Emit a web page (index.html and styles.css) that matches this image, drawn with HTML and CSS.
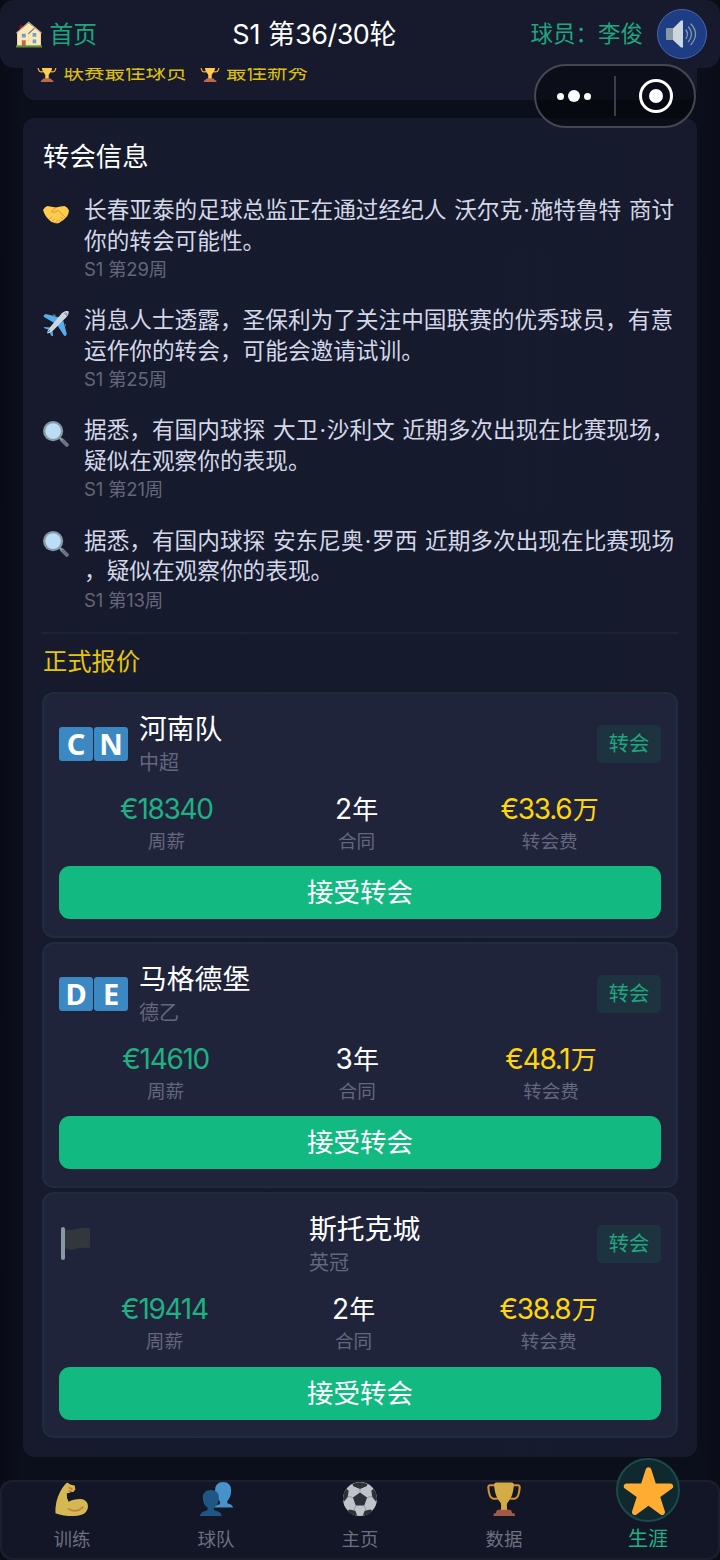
FILE: index.html
```html
<!DOCTYPE html>
<html lang="zh-CN">
<head>
<meta charset="utf-8">
<title>转会信息</title>
<link rel="stylesheet" href="styles.css">
</head>
<body>
<svg class="defs" width="0" height="0">
  <symbol id="trophy" viewBox="0 0 36 36">
    <path fill="none" stroke="#ffac33" stroke-width="2.2" d="M9 3.5H3.5Q1.2 3.5 1.4 6Q2.2 16.500 6 17.500Q8 18 11.500 17.500M27 3.500h5.500q2.300 0 2.100 2.500Q33.800 16.500 30 17.500Q28 18 24.500 17.500"/>
    <path fill="#ffcc4d" d="M10 .500H26Q28.500 .500 28.500 2.500C28 12 25.500 18 22 21.500c-1.500 1.500-1 5.500-.5 8.500h-7c.5-3 1-7-.5-8.500C10.500 18 8 12 7.500 2.500Q7.500 .500 10 .500z"/>
    <path fill="#c1694f" d="M12 29.500h12q2 0 2.500 3.500h2q1 0 1 1.500V36H7v-1.500q0-1.500 1-1.500h1.500q.5-3.500 2.500-3.500z"/>
  </symbol>
  <symbol id="glass" viewBox="0 0 36 36">
    <path stroke="#66757f" stroke-width="5.500" stroke-linecap="round" d="M26.500 26.500l6.500 6.500"/>
    <path stroke="#8899a6" stroke-width="3" d="M22 22l4.500 4.500"/>
    <circle cx="14" cy="14" r="14" fill="#8899a6"/>
    <circle cx="14" cy="14" r="10.800" fill="#bbddf5"/>
  </symbol>
</svg>

<header class="topbar">
  <div class="home">
    <svg class="home-icon" viewBox="0 0 36 36">
      <path fill="#a0041e" d="M5 5h4v8H5z"/>
      <path fill="#ffe8b6" d="M1.500 15L17.500 2 34.500 15v19h-33z"/>
      <path fill="#b9a98a" d="M17.500 0L36 15.500l-1 1.200L17.500 2.500 1 16.700 0 15.500z"/>
      <path fill="#66757f" d="M25 8.500l1 1.200-8.500 8-1-1z"/>
      <path fill="#f4d99a" d="M17 18l1-1v17h-1z"/>
      <path fill="#5fa3d9" d="M8 17h5.500v5H8zM23 16h5v5h-5zM23 25h5v5h-5z"/>
      <path fill="#c1694f" d="M8 26h5.500v8H8z"/>
      <path fill="#5c913b" d="M0 33h36v3H0z"/>
    </svg>
    <span class="home-label">首页</span>
  </div>
  <div class="round">S1 第<span class="tight">36/30</span>轮</div>
  <div class="player">
    <span class="player-name">球员：李俊</span>
    <span class="sound">
      <svg viewBox="0 0 32 32">
        <path fill="#8899a6" d="M1 10h8v12H1q-1 0-1-1V11q0-1 1-1z"/>
        <path fill="#ccd6dd" d="M7 10.500L15 2.500h2v27h-2L7 22z"/>
        <path fill="none" stroke="#8899a6" stroke-width="1.300" stroke-linecap="round" d="M20 12q3 4 0 8.500M22.500 9q6 7 0 14.500M25 6q9 10 0 20.500"/>
      </svg>
    </span>
  </div>
</header>

<div class="capsule">
  <span class="dots"><i></i><i class="big"></i><i></i></span>
  <span class="sep"></span>
  <span class="target"><i></i></span>
</div>

<main class="content">
  <section class="card awards">
    <span class="award"><svg viewBox="0 0 36 36"><use href="#trophy"/></svg>联赛最佳球员</span>
    <span class="award"><svg viewBox="0 0 36 36"><use href="#trophy"/></svg>最佳新秀</span>
  </section>

  <section class="card transfer">
    <h2 class="title">转会信息</h2>
    <ul class="news">
      <li class="item">
        <svg class="item-icon" viewBox="0 0 36 36">
          <path fill="#ef9645" d="M3 17l12 13q4 2 8 0l10-12-4-8H7z"/>
          <path fill="#ffcb4c" d="M0 12.500Q3 8 6 7q6 1 12 2 6-1.500 12-2 4 2 6 6-1 7-4 9.500-3 4-7 6-4 3-8 1-5 1-8-3Q3 22 0 12.500z"/>
          <path fill="none" stroke="#d98a32" stroke-width="1.200" stroke-linecap="round" d="M18 9q-5 3-6 6 4 2 9-2l9 9M9 25l3-3M13 28l3-3M18 29l2-2M25 23l3 3M22 26l2 2"/>
        </svg>
        <div class="item-body">
          <p>长春亚泰的足球总监正在通过经纪人 沃尔克<i class="dot">·</i>施特鲁特 商讨<br>你的转会可能性。</p>
          <small>S1 第29周</small>
        </div>
      </li>
      <li class="item">
        <svg class="item-icon" viewBox="0 0 36 36">
          <path fill="#55acee" d="M1 6l3-2 19 5-7 8L1 8zM28 13l5 19-2 3-2-1-9-14zM1 22l10 1 3 3-3 1-9-3zM14 35l-1-10-3-3-2 3 3 9z"/>
          <path fill="#66757f" d="M13 5l4 0 1 3-3 0zM31 17l1 4-3 0z"/>
          <path fill="#ccd6dd" d="M26 3q5-4 9-3 2 4-3 9L14 27q-5 4-8 4-1-3 4-9z"/>
          <path fill="#8899a6" d="M29 3l3-1 2 2-1 3z"/>
          <path fill="#269" d="M5 31l4-5 1 1z"/>
        </svg>
        <div class="item-body">
          <p>消息人士透露，圣保利为了关注中国联赛的优秀球员，有意<br>运作你的转会，可能会邀请试训。</p>
          <small>S1 第25周</small>
        </div>
      </li>
      <li class="item">
        <svg class="item-icon" viewBox="0 0 36 36"><use href="#glass"/></svg>
        <div class="item-body">
          <p>据悉，有国内球探 大卫<i class="dot">·</i>沙利文 近期多次出现在比赛现场，<br>疑似在观察你的表现。</p>
          <small>S1 第21周</small>
        </div>
      </li>
      <li class="item">
        <svg class="item-icon" viewBox="0 0 36 36"><use href="#glass"/></svg>
        <div class="item-body">
          <p>据悉，有国内球探 安东尼奥<i class="dot">·</i>罗西 近期多次出现在比赛现场<br>，疑似在观察你的表现。</p>
          <small>S1 第13周</small>
        </div>
      </li>
    </ul>

    <h3 class="subtitle">正式报价</h3>
    <div class="offers">
      <article class="offer">
        <div class="offer-head">
          <div class="flag"><b>C</b><b>N</b></div>
          <div class="club"><strong>河南队</strong><span>中超</span></div>
          <span class="tag">转会</span>
        </div>
        <div class="stats">
          <div class="stat"><b class="wage">€18340</b><span>周薪</span></div>
          <div class="stat"><b>2<i>年</i></b><span>合同</span></div>
          <div class="stat"><b class="fee">€33.6<i>万</i></b><span>转会费</span></div>
        </div>
        <button class="accept">接受转会</button>
      </article>
      <article class="offer">
        <div class="offer-head">
          <div class="flag"><b>D</b><b>E</b></div>
          <div class="club"><strong>马格德堡</strong><span>德乙</span></div>
          <span class="tag">转会</span>
        </div>
        <div class="stats">
          <div class="stat"><b class="wage">€14610</b><span>周薪</span></div>
          <div class="stat"><b>3<i>年</i></b><span>合同</span></div>
          <div class="stat"><b class="fee">€48.1<i>万</i></b><span>转会费</span></div>
        </div>
        <button class="accept">接受转会</button>
      </article>
      <article class="offer">
        <div class="offer-head">
          <div class="flag flag-wide">
            <svg viewBox="0 0 34 34">
              <path fill="#31373d" d="M5 3q7 2 12 0t13-1q1 0 1 1v18q0 1-1 1-8-1-13 1T5 22z"/>
              <rect x="2" y="1" width="4" height="33" rx="2" fill="#8899a6"/>
            </svg>
          </div>
          <div class="club"><strong>斯托克城</strong><span>英冠</span></div>
          <span class="tag">转会</span>
        </div>
        <div class="stats">
          <div class="stat"><b class="wage">€19414</b><span>周薪</span></div>
          <div class="stat"><b>2<i>年</i></b><span>合同</span></div>
          <div class="stat"><b class="fee">€38.8<i>万</i></b><span>转会费</span></div>
        </div>
        <button class="accept">接受转会</button>
      </article>
    </div>
  </section>
</main>

<nav class="tabbar">
  <a class="tab">
    <svg viewBox="0 0 36 36">
      <path fill="#ffdc5d" d="M15.500 1.200Q13 0 11 2 4 10 1.500 21 0 28 .5 33q8 3 19 3 9 0 13-4 3.500-4 2-9-2-5-8-5-7 0-12 3-2.500-4-2-9 3 0 4.500-2 3 1.500 3.500-1 2-1 .5-3 1-2-1.500-2.500-2-.5-6-2.300z"/>
      <path fill="none" stroke="#ef9645" stroke-width="1.800" stroke-linecap="round" d="M14.500 28.500q8 5 15-2M15 6l3 1.500M15 9.500l2 .5"/>
    </svg>
    <span>训练</span>
  </a>
  <a class="tab">
    <svg viewBox="0 0 36 36">
      <path fill="#55acee" d="M16 27q0-2 6-3.500V20q-5-3-5-11 0-9 8.500-9T34 9q0 7-4 11v2.500q6 1.500 6 4.500z"/>
      <path fill="#269" d="M1 36q0-4 8-6v-3Q4 24 4 17q0-8.500 8.500-8.500T21 17q0 7-5 10v3q8 1.500 8 6z"/>
    </svg>
    <span>球队</span>
  </a>
  <a class="tab">
    <svg viewBox="0 0 36 36">
      <circle cx="18" cy="18" r="18" fill="#e6ebee"/>
      <path fill="#31373d" d="M18 11l7.500 5.500L22.500 25h-9l-3-8.500zM10 2Q17-1.500 26 2l-1 2.500-7 3-7-3zM0 17q.5-6 3.500-9.500L6 9l-1 7-4 5Q0 20 0 17zM36 17q-.5-6-3.500-9.500L30 9l1 7 4 5q1-1 1-4zM5 30.500l2-1.500 6 1.500 2 5Q9 35 5 30.500zM31 30.500L29 29l-6 1.500-2 5q6-.5 10-5z"/>
      <path fill="none" stroke="#9aa5ad" stroke-width=".8" d="M18 7v4M25.500 16.500L31 15M22.500 25l2 5M13.500 25l-2 5M10.500 16.500L5 15"/>
    </svg>
    <span>主页</span>
  </a>
  <a class="tab">
    <svg viewBox="0 0 36 36"><use href="#trophy"/></svg>
    <span>数据</span>
  </a>
  <a class="tab active">
    <i class="halo">
      <svg viewBox="0 0 36 36"><path fill="#ffac33" d="M27.287 34.627c-.404 0-.806-.124-1.152-.371L18 28.422l-8.135 5.834c-.343.247-.75.371-1.148.371-.404 0-.806-.125-1.151-.376-.67-.487-.952-1.342-.704-2.131l3.117-9.642-8.005-5.790c-.667-.492-.944-1.349-.695-2.134s.982-1.320 1.800-1.320l9.937-.017 3.125-9.636c.252-.787.983-1.320 1.850-1.320s1.600.533 1.851 1.320l3.108 9.630 9.933.023c.820 0 1.553.535 1.804 1.320.250.785-.026 1.642-.695 2.134l-8.005 5.789 3.115 9.643c.249.789-.033 1.645-.704 2.131-.345.252-.747.376-1.152.376z"/></svg>
    </i>
    <span>生涯</span>
  </a>
</nav>
</body>
</html>
```
FILE: styles.css
```css
* { box-sizing: border-box; }
html { background: #04060c; }
body {
  margin: 0;
  width: 720px;
  height: 1560px;
  overflow: hidden;
  display: flex;
  flex-direction: column;
  background: linear-gradient(90deg, #090c17 0, #0b0e1b 22px, #0b0e1b 698px, #0a0d18 720px);
  color: #fff;
  font-family: Inter, "Noto Sans CJK SC", sans-serif;
  position: relative;
}
h2, h3, p, ul { margin: 0; padding: 0; font-weight: 400; }
i { font-style: normal; }
.defs { position: absolute; }

.topbar {
  position: relative;
  z-index: 2;
  flex: none;
  height: 68px;
  padding: 0 13px 0 16px;
  display: flex;
  justify-content: space-between;
  align-items: center;
  background: #161a2c;
  border-radius: 14px;
  white-space: nowrap;
}
.home { display: flex; align-items: center; gap: 7.500px; color: #1fa67e; font-size: 23.800px; }
.home-icon { width: 26px; height: 27px; }
.home-label, .player-name { padding-bottom: 4px; }
.round { font-size: 27px; padding: 0 0 3px 1px; }
.tight { letter-spacing: -.5px; }
.player { display: flex; align-items: center; gap: 14px; color: #1fa67e; font-size: 22.500px; }
.sound {
  width: 50px;
  height: 50px;
  border: 1.500px solid #4866a8;
  border-radius: 50%;
  background: #1f3d85;
  display: flex;
  align-items: center;
  justify-content: center;
}
.sound svg { width: 32px; height: 32px; }

.capsule {
  position: absolute;
  z-index: 3;
  left: 534px;
  top: 64px;
  width: 162px;
  height: 64px;
  padding: 0 21px;
  display: flex;
  align-items: center;
  justify-content: space-between;
  border: 2px solid #464851;
  border-radius: 32px;
  background: rgba(5, 6, 12, .6);
}
.dots { display: flex; align-items: center; gap: 4px; }
.dots i { width: 7px; height: 7px; border-radius: 50%; background: #fff; }
.dots .big { width: 12px; height: 12px; }
.sep { width: 2px; height: 40px; background: #3d3f48; }
.target {
  width: 34px;
  height: 34px;
  border: 3px solid #fff;
  border-radius: 50%;
  display: flex;
  align-items: center;
  justify-content: center;
}
.target i { width: 14px; height: 14px; border-radius: 50%; background: #fff; }

.content { flex: 1; padding: 0 23px; }
.card { background: #161a2c; border-radius: 12px; }
.awards {
  height: 50px;
  margin-top: -18px;
  padding: 0 14px 6px;
  display: flex;
  align-items: center;
  color: #dcbf10;
  font-size: 20.500px;
  line-height: 30px;
  white-space: nowrap;
}
.award { display: flex; align-items: center; gap: 6.500px; margin-right: 13px; }
.award svg { width: 20px; height: 20px; }

.transfer { height: 1339.500px; margin-top: 17.500px; padding: 20px 19px 19px; background: linear-gradient(90deg, #161a2c, #151b2d 50%, #161a2c); }
.title { font-size: 26.400px; line-height: 36px; height: 57.500px; padding-left: 1px; }
.news { list-style: none; height: 439px; border-bottom: 2px solid #1c2336; }
.item { display: flex; gap: 15px; height: 110.200px; padding-left: 1px; }
.item-icon { flex: none; width: 26px; height: 26px; margin-top: 5.500px; }
.item-body { white-space: nowrap; }
.item-body p { font-size: 22.660px; line-height: 30.500px; color: #d3d7e8; word-spacing: 1.300px; }
.dot { padding: 0 .8px 0 1.200px; }
.item-body small { display: block; font-size: 18.500px; line-height: 27px; color: #636779; letter-spacing: -.2px; }
.subtitle { font-size: 24.300px; line-height: 35px; height: 57.500px; padding: 10px 0 0 1px; color: #e6c60c; }

.offers { display: flex; flex-direction: column; gap: 4.300px; }
.offer {
  height: 246px;
  padding: 15px;
  border: 2px solid #1e2d3d;
  border-radius: 12px;
  background: #1f243a;
}
.offer-head { display: flex; align-items: center; height: 70px; }
.flag { flex: none; display: flex; gap: 1px; width: 69px; }
.flag b {
  width: 34px;
  height: 34px;
  border-radius: 3px;
  background: #3b88c3;
  font: 700 29px/34px "Noto Sans", sans-serif;
  text-align: center;
}
.flag svg { width: 34px; height: 34px; margin-bottom: 3px; }
.flag-wide { width: 239px; }
.club { flex: 1; padding: 0 0 0 11px; }
.club strong, .club span { display: block; font-weight: 400; }
.club strong { font-size: 27.800px; line-height: 38px; }
.club span { font-size: 20px; line-height: 30px; color: #64677c; }
.tag {
  width: 64px;
  height: 38px;
  border-radius: 5px;
  background: #1d3440;
  color: #1fa67e;
  font-size: 20.300px;
  line-height: 37px;
  text-align: center;
}
.stats { display: flex; justify-content: space-around; height: 70px; padding: 12px 1px 0 0; }
.stat { display: flex; flex-direction: column; align-items: center; }
.stat b { height: 36px; font-size: 28px; font-weight: 400; line-height: 36px; letter-spacing: -1.300px; }
.stat b i { font-size: 26px; letter-spacing: 0; margin-left: 1.500px; }
.stat span { font-size: 18.600px; line-height: 28px; color: #64677c; }
.wage { color: #1fb183; }
.fee { color: #ffd60a; }
.accept {
  display: block;
  width: 100%;
  height: 53px;
  margin-top: 17.500px;
  border: 0;
  border-radius: 11px;
  background: #12b981;
  color: #fff;
  font-family: inherit;
  font-size: 26.500px;
  line-height: 53px;
  padding: 0;
}

.tabbar {
  flex: none;
  height: 80px;
  display: grid;
  grid-template-columns: repeat(5, 1fr);
  background: #131626;
  box-shadow: inset 0 0 0 2px #1c1f2d;
  border-radius: 12px;
}
.tab { display: flex; flex-direction: column; align-items: center; padding-top: 2px; color: #6b6f81; font-size: 18.500px; line-height: 28px; }
.tab svg { width: 34px; height: 34px; opacity: .82; }
.tab span { margin-top: 9px; }
.tab.active { color: #1fb183; font-size: 20px; }
.halo {
  flex: none;
  width: 64px;
  height: 64px;
  margin-top: -24px;
  border: 2px solid #1a4a4a;
  border-radius: 50%;
  background: #10292f;
  display: flex;
  align-items: center;
  justify-content: center;
}
.active .halo svg { width: 53px; height: 53px; opacity: 1; }
.tab.active span { margin-top: 3px; }
```
